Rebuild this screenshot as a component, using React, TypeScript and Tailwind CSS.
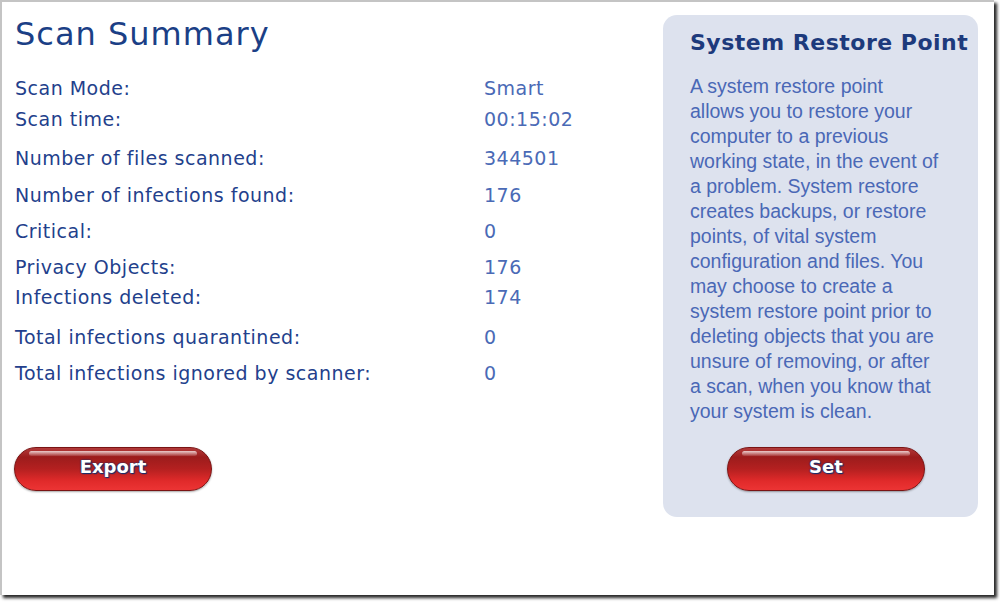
import React from 'react';

const rows = [
    { label: 'Scan Mode:', value: 'Smart', h: 'h-[31px]' },
    { label: 'Scan time:', value: '00:15:02', h: 'h-[39px]' },
    { label: 'Number of files scanned:', value: '344501', h: 'h-[37px]' },
    { label: 'Number of infections found:', value: '176', h: 'h-[36px]' },
    { label: 'Critical:', value: '0', h: 'h-[36px]' },
    { label: 'Privacy Objects:', value: '176', h: 'h-[30px]' },
    { label: 'Infections deleted:', value: '174', h: 'h-[40px]' },
    { label: 'Total infections quarantined:', value: '0', h: 'h-[36px]' },
    { label: 'Total infections ignored by scanner:', value: '0', h: 'h-[36px]' },
];

const restoreLines = [
    'A system restore point',
    'allows you to restore your',
    'computer to a previous',
    'working state, in the event of',
    'a problem. System restore',
    'creates backups, or restore',
    'points, of vital system',
    'configuration and files. You',
    'may choose to create a',
    'system restore point prior to',
    'deleting objects that you are',
    'unsure of removing, or after',
    'a scan, when you know that',
    'your system is clean.',
];

const RedButton = ({ label }: { label: string }) => (
    <button
        type="button"
        className="relative w-[198px] h-[44px] rounded-full border border-[#7a1414] bg-[linear-gradient(to_bottom,#b23a3a_0%,#9c1c1c_22%,#b42020_50%,#e02a2a_78%,#ec3434_100%)] shadow-[0_1px_2px_rgba(0,0,0,0.35)] overflow-hidden"
    >
        <span className="absolute left-[14px] right-[14px] top-[3px] h-[5px] rounded-full bg-[linear-gradient(to_bottom,rgba(255,255,255,0.75),rgba(255,255,255,0.1))]" />
        <span className="absolute inset-x-0 top-[8px] text-center text-white text-[18px] font-bold leading-[22px] [font-family:'DejaVu_Sans',Verdana,sans-serif] [text-shadow:0_0_2px_#12306e,0_0_1px_#12306e,1px_1px_1px_#12306e]">
            {label}
        </span>
    </button>
);

export default function App() {
    return (
        <div className="w-[1000px] h-[602px] bg-white relative overflow-hidden">
            <div className="w-[994px] h-[595px] bg-white border-l-2 border-t-2 border-[#c4c4c4] shadow-[3px_3px_3px_rgba(0,0,0,0.85)] flex">
                {/* Left: summary */}
                <div className="flex-1 pl-[13px] pt-[12px] [font-family:'DejaVu_Sans',Verdana,sans-serif]">
                    <h1 className="text-[32px] leading-[40px] text-[#1b3f86] tracking-[1px]">Scan Summary</h1>
                    <div className="mt-[23px]">
                        {rows.map((r) => (
                            <div key={r.label} className={`flex ${r.h}`}>
                                <div className="w-[469px] text-[19px] leading-[22px] tracking-[0.5px] text-[#233f8c] whitespace-nowrap">{r.label}</div>
                                <div className="text-[19px] leading-[22px] tracking-[0.5px] text-[#4a6ab6]">{r.value}</div>
                            </div>
                        ))}
                    </div>
                    <div className="mt-[49px] -ml-[1px]">
                        <RedButton label="Export" />
                    </div>
                </div>

                {/* Right: restore panel */}
                <div className="w-[315px] h-[502px] mt-[13px] mr-[16px] rounded-[14px] bg-[#dde2ee] pl-[27px] pt-[15px]">
                    <h2 className="text-[22px] leading-[26px] font-bold text-[#1d3a7c] [font-family:'DejaVu_Sans',Tahoma,sans-serif] tracking-[0.5px] whitespace-nowrap">
                        System Restore Point
                    </h2>
                    <p className="mt-[18px] text-[19.5px] leading-[25px] text-[#4a68b6] [font-family:'Liberation_Sans',Arial,sans-serif] whitespace-nowrap">
                        {restoreLines.map((l, i) => (
                            <React.Fragment key={i}>
                                {l}
                                {i < restoreLines.length - 1 && <br />}
                            </React.Fragment>
                        ))}
                    </p>
                    <div className="mt-[23px] ml-[37px]">
                        <RedButton label="Set" />
                    </div>
                </div>
            </div>
        </div>
    );
}
